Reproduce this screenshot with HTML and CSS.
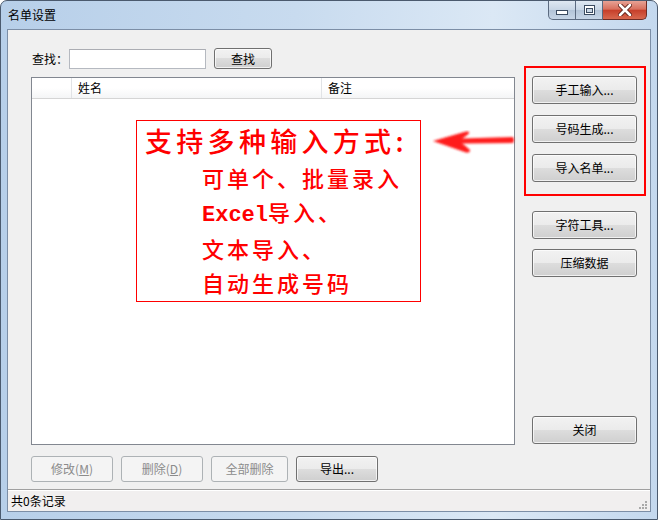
FILE: index.html
```html
<!DOCTYPE html>
<html lang="zh-CN">
  <head>
    <meta charset="UTF-8" />
    <link rel="stylesheet" href="styles.css">
    <title>名单设置</title>
  </head>
  <body>
    <div class="window">
      <div class="titlebar">
        <span class="caption">名单设置</span>
        <div class="capButtons">
          <span class="capBtn minBtn">
            <svg width="12" height="6" viewBox="0 0 12 6"><rect x="0.5" y="0.5" width="11" height="4" fill="#fff" stroke="#3b4b60"/></svg>
          </span>
          <span class="capBtn maxBtn">
            <svg width="11" height="10" viewBox="0 0 11 10"><rect x="0.5" y="0.5" width="10" height="9" fill="#fff" stroke="#3b4b60"/><rect x="2.5" y="3.5" width="6" height="4" fill="#c9d6e4" stroke="#3b4b60"/></svg>
          </span>
          <span class="capBtn closeBtn">
            <svg width="14" height="12" viewBox="0 0 14 12"><path d="M2 1 L12 11 M12 1 L2 11" stroke="#5a1d16" stroke-width="4.4" stroke-linecap="round"/><path d="M2 1 L12 11 M12 1 L2 11" stroke="#fff" stroke-width="2.6" stroke-linecap="round"/></svg>
          </span>
        </div>
      </div>

      <div class="client">
        <div class="main">
          <div class="leftPanel">
            <div class="searchRow">
              <span class="searchLabel">查找：</span>
              <input type="text" class="searchInput" />
              <button class="btn searchBtn">查找</button>
            </div>

            <div class="listView">
              <div class="listHeader">
                <div class="col colIndex"></div>
                <div class="col colName">姓名</div>
                <div class="col colNote">备注</div>
              </div>
              <div class="listBody">
                <div class="note">
                  <div class="noteTitle">支持多种输入方式:</div>
                  <div class="noteLine">可单个、批量录入</div>
                  <div class="noteLine"><span class="latin">Excel</span>导入、</div>
                  <div class="noteLine">文本导入、</div>
                  <div class="noteLine">自动生成号码</div>
                </div>
                <svg class="arrow" width="84" height="26" viewBox="0 0 84 26">
                  <defs>
                    <filter id="soft" x="-10%" y="-30%" width="120%" height="160%">
                      <feGaussianBlur stdDeviation="0.9" />
                    </filter>
                  </defs>
                  <path filter="url(#soft)" fill="#ff1a1a"
                    d="M1 11 L34 1.5 Q38 1 37 3.5 Q33 7 30 8.5 L81 7 Q83 10 81 13 L30 13.5 Q34 16 38 20 Q38 23 34 22.5 Z" />
                </svg>
              </div>
            </div>

            <div class="bottomRow">
              <button class="btn wideBtn" disabled>修改(<u>M</u>)</button>
              <button class="btn wideBtn" disabled>删除(<u>D</u>)</button>
              <button class="btn midBtn" disabled>全部删除</button>
              <button class="btn wideBtn">导出...</button>
            </div>
          </div>

          <div class="rightPanel">
            <div class="inputGroup">
              <button class="btn sideBtn">手工输入...</button>
              <button class="btn sideBtn">号码生成...</button>
              <button class="btn sideBtn">导入名单...</button>
            </div>
            <button class="btn sideBtn toolBtn">字符工具...</button>
            <button class="btn sideBtn packBtn">压缩数据</button>
            <button class="btn sideBtn closeDlg">关闭</button>
          </div>
        </div>

        <div class="statusBar">
          <span>共0条记录</span>
          <svg class="grip" width="10" height="10" viewBox="0 0 10 10">
            <rect x="7" y="1" width="2" height="2" fill="#a9a9a9"/>
            <rect x="4" y="4" width="2" height="2" fill="#a9a9a9"/>
            <rect x="7" y="4" width="2" height="2" fill="#a9a9a9"/>
            <rect x="1" y="7" width="2" height="2" fill="#a9a9a9"/>
            <rect x="4" y="7" width="2" height="2" fill="#a9a9a9"/>
            <rect x="7" y="7" width="2" height="2" fill="#a9a9a9"/>
          </svg>
        </div>
      </div>
    </div>
  </body>
</html>
```

FILE: styles.css
```css
* {
    box-sizing: border-box;
    font-family: "Noto Sans CJK SC", "Liberation Sans", sans-serif;
}

body {
    margin: 0;
    background: #ffffff;
}

.window {
    width: 658px;
    height: 520px;
    border: 1px solid #4b5a6e;
    border-radius: 7px 7px 0 0;
    background: linear-gradient(90deg, #b7cfe9 0%, #c8dbef 45%, #dbe8f5 75%, #c4d8ee 100%);
    padding: 0 6px 7px 6px;
    display: flex;
    flex-direction: column;
}

.titlebar {
    height: 28px;
    display: flex;
    align-items: flex-start;
}

.caption {
    font-size: 12px;
    line-height: 12px;
    margin-top: 8px;
    margin-left: 1px;
    color: #000;
}

.capButtons {
    margin-left: auto;
    margin-right: 4px;
    display: flex;
}

.capBtn {
    height: 19px;
    display: grid;
    place-items: center;
    border: 1px solid #5b6a80;
    border-top: none;
}

.minBtn {
    width: 28px;
    border-radius: 0 0 0 5px;
    background: linear-gradient(#dfe8f2 0%, #c7d5e4 50%, #b3c4d8 51%, #c6d5e6 100%);
}

.minBtn svg {
    margin-top: 5px;
}

.maxBtn {
    width: 27px;
    border-left: none;
    background: linear-gradient(#dfe8f2 0%, #c7d5e4 50%, #b3c4d8 51%, #c6d5e6 100%);
}

.closeBtn {
    width: 44px;
    border-left: none;
    border-color: #6e2b24;
    border-radius: 0 0 5px 0;
    background: linear-gradient(#e7a295 0%, #d8705e 45%, #c7402b 52%, #d8684f 100%);
}

.client {
    flex: 1;
    border: 1px solid #7c8ea6;
    background: #f0f0f0;
    display: flex;
    flex-direction: column;
}

.main {
    flex: 1;
    display: flex;
}

.leftPanel {
    padding: 18px 0 0 23px;
    display: flex;
    flex-direction: column;
}

.searchRow {
    display: flex;
    align-items: center;
    height: 21px;
}

.searchLabel {
    font-size: 12px;
    width: 38px;
    padding-left: 1px;
}

.searchInput {
    width: 137px;
    height: 20px;
    border: 1px solid #b5b9c0;
    border-top-color: #abadb3;
    background: #fff;
    outline: none;
    margin: 0;
}

.btn {
    font-size: 12px;
    color: #000;
    border: 1px solid #707070;
    border-radius: 3px;
    background: linear-gradient(#f2f2f2 0%, #ebebeb 49%, #dddddd 50%, #cfcfcf 100%);
    box-shadow: inset 0 0 0 1px rgba(255, 255, 255, 0.7);
    padding: 0;
    margin: 0;
    line-height: 14px;
}

.btn:disabled {
    color: #8b8b8b;
    border-color: #adb2b5;
    background: #f4f4f4;
    box-shadow: none;
}

.btn u {
    text-decoration: underline;
    text-underline-offset: 1px;
}

.searchBtn {
    width: 58px;
    height: 21px;
    margin-left: 8px;
}

.listView {
    margin-top: 8px;
    width: 484px;
    height: 368px;
    border: 1px solid #828790;
    background: #fff;
    display: flex;
    flex-direction: column;
}

.listHeader {
    height: 21px;
    display: flex;
    background: linear-gradient(#ffffff 0%, #ffffff 50%, #f4f5f6 100%);
    border-bottom: 1px solid #d5d5d5;
}

.col {
    font-size: 12px;
    line-height: 20px;
    padding-left: 6px;
    border-right: 1px solid #e1e3e6;
}

.colIndex {
    width: 40px;
}

.colName {
    width: 250px;
}

.colNote {
    flex: 1;
    border-right: none;
}

.listBody {
    flex: 1;
    position: relative;
}

.note {
    position: absolute;
    left: 104px;
    top: 21px;
    width: 285px;
    height: 182px;
    border: 1.5px solid #ff0000;
    color: #ff0000;
    padding: 0 0 0 8px;
}

.noteTitle {
    font-size: 27px;
    font-weight: 500;
    letter-spacing: 4.3px;
    line-height: 40px;
    white-space: nowrap;
}

.noteLine {
    font-size: 22px;
    font-weight: 500;
    letter-spacing: 3px;
    line-height: 33.5px;
    padding-left: 57px;
    white-space: nowrap;
}

.latin {
    font-family: "Liberation Mono", monospace;
    font-weight: bold;
    letter-spacing: 0;
}

.arrow {
    position: absolute;
    left: 400px;
    top: 31px;
}

.bottomRow {
    margin-top: 11px;
    display: flex;
    gap: 8px;
}

.wideBtn {
    width: 82px;
    height: 26px;
}

.midBtn {
    width: 77px;
    height: 26px;
}

.rightPanel {
    margin-left: 9px;
    padding: 36px 0 45px 0;
    display: flex;
    flex-direction: column;
}

.inputGroup {
    width: 122px;
    height: 130px;
    border: 2px solid #ff0000;
    padding: 8px 0 0 6px;
    display: flex;
    flex-direction: column;
    gap: 11px;
}

.sideBtn {
    width: 105px;
    height: 28px;
}

.rightPanel > .sideBtn {
    margin-left: 8px;
}

.toolBtn {
    margin-top: 15px;
}

.packBtn {
    margin-top: 10px;
}

.closeDlg {
    margin-top: auto;
}

.statusBar {
    height: 22px;
    border-top: 1px solid #a0a0a0;
    box-shadow: inset 0 1px 0 #ffffff;
    background: #f1efef;
    display: flex;
    align-items: center;
    padding-left: 3px;
    font-size: 12px;
}

.grip {
    margin-left: auto;
    margin-right: 2px;
    margin-top: 8px;
}
```
